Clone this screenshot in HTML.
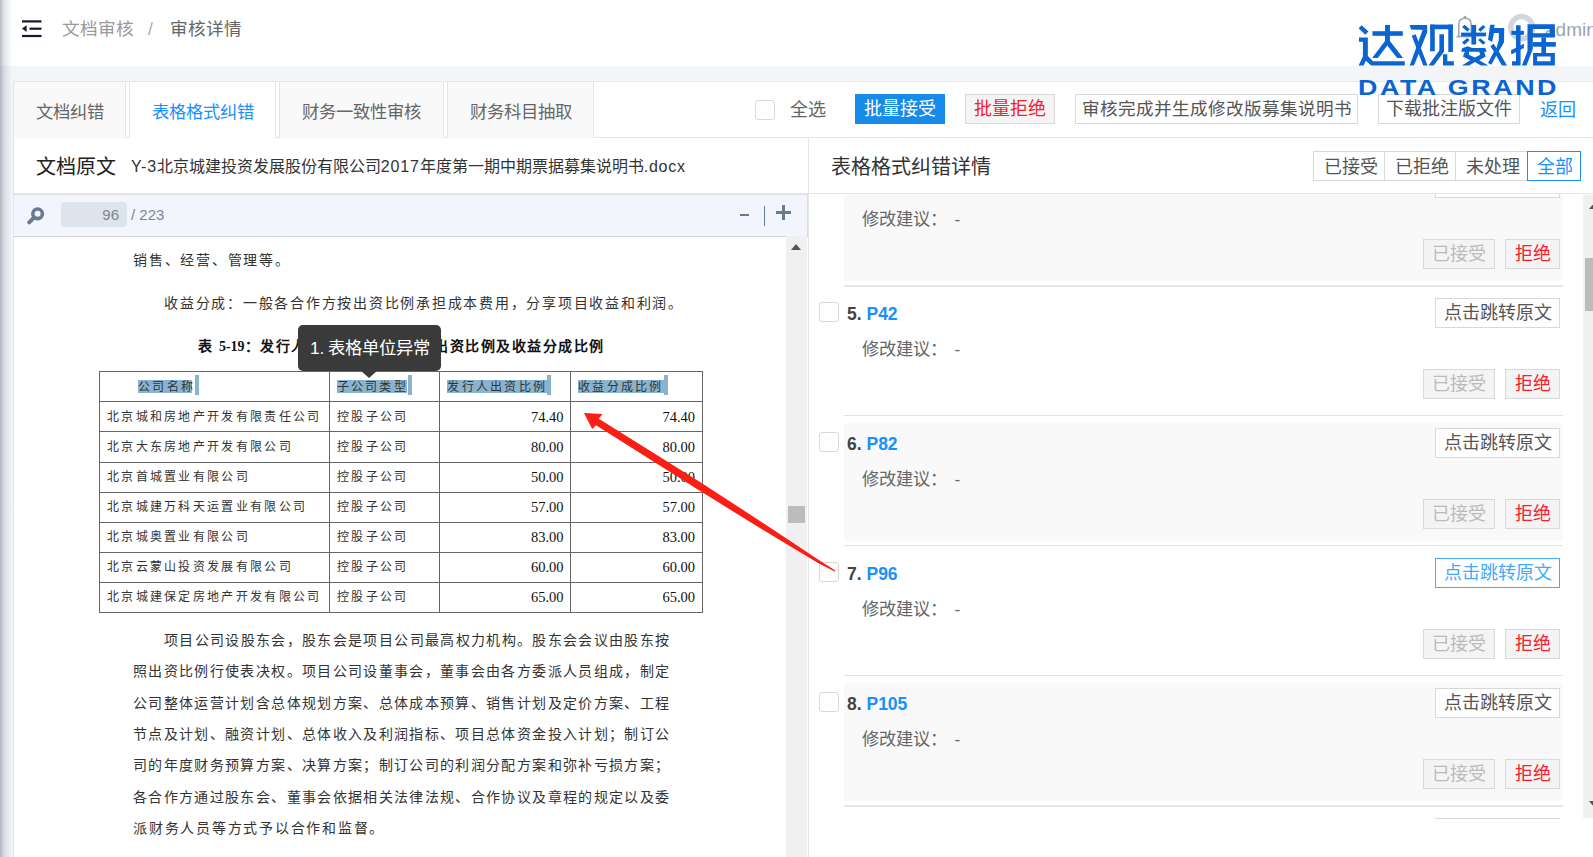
<!DOCTYPE html>
<html lang="zh-CN">
<head>
<meta charset="utf-8">
<style>
*{box-sizing:border-box;margin:0;padding:0}
html,body{width:1593px;height:857px;overflow:hidden;background:#fff}
body{position:relative;font-family:"Liberation Sans",sans-serif;color:#333}
.a{position:absolute;white-space:nowrap}
.t{line-height:1}
#shadow{position:absolute;left:0;top:0;width:12px;height:857px;background:linear-gradient(to right,rgba(110,120,135,.5),rgba(110,120,135,.2) 35%,rgba(110,120,135,0));z-index:50}
#band{position:absolute;left:0;top:66px;width:1593px;height:791px;background:#f3f5f8}
#panel{position:absolute;left:13px;top:81px;width:1600px;height:800px;background:#fff}
.tab{position:absolute;top:81px;height:57px;border:1px solid #e6e6e6;border-bottom:none;background:#f9f9f9;color:#666;font-size:17.3px;line-height:60px;text-align:center}
.tab.on{background:#fff;color:#1890ff}
.btn{position:absolute;height:30px;border:1px solid #d9d9d9;font-size:18px;line-height:28px;text-align:center;background:#fff;color:#555}
.cb{position:absolute;width:20px;height:20px;border:1px solid #d9d9d9;border-radius:3px;background:#fff}
.lt{letter-spacing:0.8px}

.dp{position:absolute;white-space:nowrap;font-size:14px;line-height:16px;letter-spacing:1.75px;color:#333}
.jl{text-align:justify;text-align-last:justify;width:537px;letter-spacing:1px}
.tc{position:absolute;white-space:nowrap;font-size:12px;line-height:14px;letter-spacing:2.3px;color:#333}
.num{position:absolute;white-space:nowrap;font-family:"Liberation Serif",serif;font-size:14.5px;line-height:16px;color:#111;text-align:right}
.hl{position:absolute;background:#8ab3cf}
</style>
</head>
<body>
<div id="shadow"></div>
<!-- header -->
<svg class="a" style="left:21px;top:19px" width="22" height="19" viewBox="0 0 22 19">
  <rect x="1" y="1.3" width="19.5" height="2.2" fill="#141a32"/>
  <rect x="8.5" y="8.6" width="12" height="2.2" fill="#141a32"/>
  <rect x="1" y="15.9" width="19.5" height="2.2" fill="#141a32"/>
  <polygon points="1,9.6 5.6,6.2 5.6,13" fill="#141a32"/>
</svg>
<div class="a t" id="bc1" style="left:62px;top:21px;font-size:17.6px;color:#999">文档审核</div>
<div class="a t" id="bcs" style="left:148px;top:21px;font-size:17.6px;color:#aaa">/</div>
<div class="a t" id="bc2" style="left:170px;top:21px;font-size:17.6px;color:#666">审核详情</div>

<div id="band"></div>
<div id="panel"></div>
<div class="a" style="left:13px;top:81px;width:1580px;height:1px;background:#e8e8e8"></div>
<div class="a" style="left:13px;top:137px;width:1px;height:720px;background:#e6e6e6"></div>
<div class="a" style="left:13px;top:137px;width:1580px;height:1px;background:#e6e6e6"></div>

<div class="tab" style="left:13px;width:113px">文档纠错</div>
<div class="tab on" style="left:129px;width:147px">表格格式纠错</div>
<div class="tab" style="left:279px;width:165px">财务一致性审核</div>
<div class="tab" style="left:447px;width:147px">财务科目抽取</div>

<div class="cb" style="left:755px;top:100px"></div>
<div class="a t" style="left:790px;top:101px;font-size:18px;color:#666">全选</div>
<div class="btn" style="left:855px;top:94px;width:90px;background:#168bea;border-color:#168bea;color:#fff">批量接受</div>
<div class="btn" style="left:965px;top:94px;width:90px;background:#f4f4f4;color:#f5222d">批量拒绝</div>
<div class="btn" style="left:1075px;top:94px;width:283px;font-size:17.6px">审核完成并生成修改版募集说明书</div>
<div class="btn" style="left:1378px;top:94px;width:142px">下载批注版文件</div>
<div class="a t" style="left:1540px;top:101px;font-size:18px;color:#1890ff">返回</div>

<!-- panel headers -->
<div class="a t" style="left:36px;top:157px;font-size:20px;color:#222">文档原文</div>
<div class="a t" style="left:131px;top:159px;font-size:16px;color:#333"><span class="lt">Y-3</span>北京城建投资发展股份有限公司<span class="lt">2017</span>年度第一期中期票据募集说明书<span class="lt">.docx</span></div>
<div class="a" style="left:14px;top:193px;width:1580px;height:1px;background:#e6e6e6"></div>
<div class="a" style="left:808px;top:137px;width:1px;height:720px;background:#e6e6e6"></div>
<div class="a t" style="left:831px;top:157px;font-size:20px;color:#333">表格格式纠错详情</div>


<!-- filter group -->
<div class="a" style="left:1313px;top:151px;width:268px;height:30px;border:1px solid #d9d9d9"></div>
<div class="a t" style="left:1324px;top:158px;font-size:18px;color:#555">已接受</div>
<div class="a" style="left:1384px;top:151px;width:1px;height:30px;background:#d9d9d9"></div>
<div class="a t" style="left:1395px;top:158px;font-size:18px;color:#555">已拒绝</div>
<div class="a" style="left:1455px;top:151px;width:1px;height:30px;background:#d9d9d9"></div>
<div class="a t" style="left:1466px;top:158px;font-size:18px;color:#555">未处理</div>
<div class="a" style="left:1527px;top:151px;width:54px;height:30px;border:1px solid #1890ff"></div>
<div class="a t" style="left:1537px;top:158px;font-size:18px;color:#1890ff">全部</div>

<!-- toolbar -->
<div class="a" style="left:14px;top:194px;width:794px;height:43px;background:#f2f6fc;border-top:1px solid #dedede;border-bottom:1px solid #cfd2d6;border-right:1px solid #dcdcdc"></div>
<svg class="a" style="left:26px;top:206px" width="20" height="20" viewBox="0 0 20 20">
  <circle cx="11.6" cy="7.8" r="4.8" fill="none" stroke="#6b7a90" stroke-width="3.6"/>
  <line x1="8.2" y1="11.3" x2="3.2" y2="16.3" stroke="#6b7a90" stroke-width="4" stroke-linecap="round"/>
</svg>
<div class="a" style="left:61px;top:202px;width:66px;height:25px;background:#dde4ec;border-radius:4px"></div>
<div class="a t" style="left:92px;top:207px;width:27px;font-size:15px;color:#7a8699;text-align:right">96</div>
<div class="a t" style="left:131px;top:207px;font-size:15px;color:#7a8699">/ 223</div>
<div class="a" style="left:740px;top:214px;width:9px;height:2.4px;background:#6b7a90"></div>
<div class="a" style="left:764px;top:206px;width:1.2px;height:20px;background:#6b7a90"></div>
<div class="a" style="left:776px;top:211.3px;width:15px;height:2.6px;background:#6b7a90"></div>
<div class="a" style="left:782.2px;top:205px;width:2.6px;height:15px;background:#6b7a90"></div>


<!-- document -->
<div class="dp" style="left:133px;top:252px">销售、经营、管理等。</div>
<div class="dp" style="left:164px;top:295px">收益分成：一般各合作方按出资比例承担成本费用，分享项目收益和利润。</div>
<div class="dp" style="left:198px;top:338px;font-weight:bold;letter-spacing:1.5px;color:#111">表 <span style="font-family:'Liberation Serif',serif;letter-spacing:0">5-19</span>：发行人合营公司股东</div>
<div class="dp" style="left:434px;top:338px;font-weight:bold;letter-spacing:1.5px;color:#111">出资比例及收益分成比例</div>
<div class="a" style="left:99px;top:371px;width:604px;height:242px;border:1px solid #666"></div>
<div class="a" style="left:99px;top:401.1px;width:604px;height:1px;background:#666"></div>
<div class="a" style="left:99px;top:431.4px;width:604px;height:1px;background:#666"></div>
<div class="a" style="left:99px;top:461.5px;width:604px;height:1px;background:#666"></div>
<div class="a" style="left:99px;top:491.7px;width:604px;height:1px;background:#666"></div>
<div class="a" style="left:99px;top:521.8px;width:604px;height:1px;background:#666"></div>
<div class="a" style="left:99px;top:551.9px;width:604px;height:1px;background:#666"></div>
<div class="a" style="left:99px;top:581.9px;width:604px;height:1px;background:#666"></div>
<div class="a" style="left:328.5px;top:371px;width:1px;height:242px;background:#666"></div>
<div class="a" style="left:439.1px;top:371px;width:1px;height:242px;background:#666"></div>
<div class="a" style="left:569.9px;top:371px;width:1px;height:242px;background:#666"></div>
<div class="hl" style="left:138px;top:380px;width:53.5px;height:13.4px"></div>
<div class="hl" style="left:195.0px;top:375px;width:3.8px;height:20px"></div>
<div class="hl" style="left:336.5px;top:380px;width:70.0px;height:13.4px"></div>
<div class="hl" style="left:408.2px;top:375px;width:3.8px;height:20px"></div>
<div class="hl" style="left:447.3px;top:380px;width:99.5px;height:13.4px"></div>
<div class="hl" style="left:546.9px;top:375px;width:3.8px;height:20px"></div>
<div class="hl" style="left:578px;top:380px;width:85.6px;height:13.4px"></div>
<div class="hl" style="left:664.2px;top:375px;width:3.8px;height:20px"></div>
<div class="tc" style="left:138px;top:380px">公司名称</div>
<div class="tc" style="left:336.5px;top:380px">子公司类型</div>
<div class="tc" style="left:447.3px;top:380px">发行人出资比例</div>
<div class="tc" style="left:578px;top:380px">收益分成比例</div>
<div class="tc" style="left:107px;top:409.8px">北京城和房地产开发有限责任公司</div>
<div class="tc" style="left:337px;top:409.8px">控股子公司</div>
<div class="num" style="left:463px;width:100.5px;top:408.8px">74.40</div>
<div class="num" style="left:594px;width:101px;top:408.8px">74.40</div>
<div class="tc" style="left:107px;top:439.9px">北京大东房地产开发有限公司</div>
<div class="tc" style="left:337px;top:439.9px">控股子公司</div>
<div class="num" style="left:463px;width:100.5px;top:438.9px">80.00</div>
<div class="num" style="left:594px;width:101px;top:438.9px">80.00</div>
<div class="tc" style="left:107px;top:470.1px">北京首城置业有限公司</div>
<div class="tc" style="left:337px;top:470.1px">控股子公司</div>
<div class="num" style="left:463px;width:100.5px;top:469.1px">50.00</div>
<div class="num" style="left:594px;width:101px;top:469.1px">50.00</div>
<div class="tc" style="left:107px;top:500.2px">北京城建万科天运置业有限公司</div>
<div class="tc" style="left:337px;top:500.2px">控股子公司</div>
<div class="num" style="left:463px;width:100.5px;top:499.2px">57.00</div>
<div class="num" style="left:594px;width:101px;top:499.2px">57.00</div>
<div class="tc" style="left:107px;top:530.3px">北京城奥置业有限公司</div>
<div class="tc" style="left:337px;top:530.3px">控股子公司</div>
<div class="num" style="left:463px;width:100.5px;top:529.3px">83.00</div>
<div class="num" style="left:594px;width:101px;top:529.3px">83.00</div>
<div class="tc" style="left:107px;top:560.4px">北京云蒙山投资发展有限公司</div>
<div class="tc" style="left:337px;top:560.4px">控股子公司</div>
<div class="num" style="left:463px;width:100.5px;top:559.4px">60.00</div>
<div class="num" style="left:594px;width:101px;top:559.4px">60.00</div>
<div class="tc" style="left:107px;top:590.2px">北京城建保定房地产开发有限公司</div>
<div class="tc" style="left:337px;top:590.2px">控股子公司</div>
<div class="num" style="left:463px;width:100.5px;top:589.2px">65.00</div>
<div class="num" style="left:594px;width:101px;top:589.2px">65.00</div>
<div class="dp jl" style="left:164px;width:506px;top:632.0px">项目公司设股东会，股东会是项目公司最高权力机构。股东会会议由股东按</div>
<div class="dp jl" style="left:133px;top:663.3px">照出资比例行使表决权。项目公司设董事会，董事会由各方委派人员组成，制定</div>
<div class="dp jl" style="left:133px;top:694.7px">公司整体运营计划含总体规划方案、总体成本预算、销售计划及定价方案、工程</div>
<div class="dp jl" style="left:133px;top:726.0px">节点及计划、融资计划、总体收入及利润指标、项目总体资金投入计划；制订公</div>
<div class="dp jl" style="left:133px;top:757.3px">司的年度财务预算方案、决算方案；制订公司的利润分配方案和弥补亏损方案；</div>
<div class="dp jl" style="left:133px;top:788.6px">各合作方通过股东会、董事会依据相关法律法规、合作协议及章程的规定以及委</div>
<div class="dp" style="left:133px;top:820.0px">派财务人员等方式予以合作和监督。</div>

<!-- right list -->
<div id="rl" class="a" style="left:809px;top:194px;width:774px;height:625px;overflow:hidden">
<div class="a" style="left:35px;top:-31.0px;width:719px;height:118px;background:#f9f9f9"></div>
<div class="cb" style="left:10px;top:-22.0px"></div>
<div class="a t" style="left:38px;top:-20.0px;font-size:17.5px;font-weight:bold;color:#444">4. <span style="color:#1890ff">P32</span></div>
<div class="a t" style="left:53px;top:17.0px;font-size:17.3px;color:#666">修改建议：&nbsp; <span style="position:relative;left:-2px">-</span></div>
<div class="btn" style="left:626px;top:-25.8px;width:125px;">点击跳转原文</div>
<div class="btn" style="left:614px;top:45.2px;width:72px;background:#f4f4f4;color:#bbb">已接受</div>
<div class="btn" style="left:696px;top:45.2px;width:55px;background:#f4f4f4;color:#f5222d">拒绝</div>
<div class="a" style="left:35px;top:91.0px;width:719px;height:2px;background:#e6e6e6"></div>
<div class="cb" style="left:10px;top:108.0px"></div>
<div class="a t" style="left:38px;top:111.5px;font-size:17.5px;font-weight:bold;color:#444">5. <span style="color:#1890ff">P42</span></div>
<div class="a t" style="left:53px;top:147.0px;font-size:17.3px;color:#666">修改建议：&nbsp; <span style="position:relative;left:-2px">-</span></div>
<div class="btn" style="left:626px;top:104.2px;width:125px;">点击跳转原文</div>
<div class="btn" style="left:614px;top:175.2px;width:72px;background:#f4f4f4;color:#bbb">已接受</div>
<div class="btn" style="left:696px;top:175.2px;width:55px;background:#f4f4f4;color:#f5222d">拒绝</div>
<div class="a" style="left:35px;top:221.0px;width:719px;height:1px;background:#e2e2e2"></div>
<div class="a" style="left:35px;top:229.0px;width:719px;height:118px;background:#f9f9f9"></div>
<div class="cb" style="left:10px;top:238.0px"></div>
<div class="a t" style="left:38px;top:241.5px;font-size:17.5px;font-weight:bold;color:#444">6. <span style="color:#1890ff">P82</span></div>
<div class="a t" style="left:53px;top:277.0px;font-size:17.3px;color:#666">修改建议：&nbsp; <span style="position:relative;left:-2px">-</span></div>
<div class="btn" style="left:626px;top:234.2px;width:125px;">点击跳转原文</div>
<div class="btn" style="left:614px;top:305.2px;width:72px;background:#f4f4f4;color:#bbb">已接受</div>
<div class="btn" style="left:696px;top:305.2px;width:55px;background:#f4f4f4;color:#f5222d">拒绝</div>
<div class="a" style="left:35px;top:351.0px;width:719px;height:1px;background:#e2e2e2"></div>
<div class="cb" style="left:10px;top:368.0px"></div>
<div class="a t" style="left:38px;top:371.5px;font-size:17.5px;font-weight:bold;color:#444">7. <span style="color:#1890ff">P96</span></div>
<div class="a t" style="left:53px;top:407.0px;font-size:17.3px;color:#666">修改建议：&nbsp; <span style="position:relative;left:-2px">-</span></div>
<div class="btn" style="left:626px;top:364.2px;width:125px;border-color:#44aaf5;color:#44aaf5">点击跳转原文</div>
<div class="btn" style="left:614px;top:435.2px;width:72px;background:#f4f4f4;color:#bbb">已接受</div>
<div class="btn" style="left:696px;top:435.2px;width:55px;background:#f4f4f4;color:#f5222d">拒绝</div>
<div class="a" style="left:35px;top:481.0px;width:719px;height:1px;background:#e2e2e2"></div>
<div class="a" style="left:35px;top:489.0px;width:719px;height:118px;background:#f9f9f9"></div>
<div class="cb" style="left:10px;top:498.0px"></div>
<div class="a t" style="left:38px;top:501.5px;font-size:17.5px;font-weight:bold;color:#444">8. <span style="color:#1890ff">P105</span></div>
<div class="a t" style="left:53px;top:537.0px;font-size:17.3px;color:#666">修改建议：&nbsp; <span style="position:relative;left:-2px">-</span></div>
<div class="btn" style="left:626px;top:494.2px;width:125px;">点击跳转原文</div>
<div class="btn" style="left:614px;top:565.2px;width:72px;background:#f4f4f4;color:#bbb">已接受</div>
<div class="btn" style="left:696px;top:565.2px;width:55px;background:#f4f4f4;color:#f5222d">拒绝</div>
<div class="a" style="left:35px;top:611.0px;width:719px;height:2px;background:#e6e6e6"></div>
<div class="cb" style="left:10px;top:628.0px"></div>
<div class="a t" style="left:38px;top:631.5px;font-size:17.5px;font-weight:bold;color:#444">9. <span style="color:#1890ff">P120</span></div>
<div class="a t" style="left:53px;top:667.0px;font-size:17.3px;color:#666">修改建议：&nbsp; <span style="position:relative;left:-2px">-</span></div>
<div class="btn" style="left:626px;top:624.2px;width:125px;">点击跳转原文</div>
<div class="btn" style="left:614px;top:695.2px;width:72px;background:#f4f4f4;color:#bbb">已接受</div>
<div class="btn" style="left:696px;top:695.2px;width:55px;background:#f4f4f4;color:#f5222d">拒绝</div>
<div class="a" style="left:35px;top:741.0px;width:719px;height:1px;background:#e2e2e2"></div>
</div>
<!-- right scrollbar -->
<div class="a" style="left:1583px;top:195px;width:10px;height:623px;background:#f0f0f0"></div>
<div class="a" style="left:1589px;top:203px;width:0;height:0;border-left:5.5px solid transparent;border-right:5.5px solid transparent;border-bottom:6px solid #555"></div>
<div class="a" style="left:1585px;top:258px;width:10px;height:53px;background:#bcbcbc"></div>
<div class="a" style="left:1589px;top:801px;width:0;height:0;border-left:5.5px solid transparent;border-right:5.5px solid transparent;border-top:6px solid #555"></div>
<!-- doc scrollbar -->
<div class="a" style="left:786px;top:236px;width:21px;height:621px;background:#f0f0f0"></div>
<div class="a" style="left:791px;top:244px;width:0;height:0;border-left:5.5px solid transparent;border-right:5.5px solid transparent;border-bottom:6px solid #555"></div>
<div class="a" style="left:788px;top:506px;width:17px;height:17px;background:#bcbcbc"></div>

<!-- tooltip -->
<div class="a" style="left:298px;top:325px;width:143px;height:45.5px;background:#3a3a3a;border-radius:5px;z-index:20"></div>
<div class="a" style="left:360px;top:370px;width:0;height:0;border-left:9.5px solid transparent;border-right:9.5px solid transparent;border-top:8.5px solid #3a3a3a;z-index:20"></div>
<div class="a t" style="left:310px;top:340px;font-size:17.3px;word-spacing:-1.5px;color:#fff;z-index:21">1. 表格单位异常</div>
<!-- arrow -->
<svg class="a" style="left:0;top:0;z-index:30" width="1593" height="857" viewBox="0 0 1593 857">
  <polygon fill="#fa1e14" points="584,413 602.5,414 598.8,418.8 700,482 760,521 820,560.8 835.4,570.6 834.6,571.4 818,563 757,526.3 697,489 596,425.3 592.2,429"/>
</svg>
<!-- logo / icons -->
<svg class="a" style="left:1455px;top:15px;z-index:5" width="20" height="24" viewBox="0 0 20 24">
  <path d="M3.8,21.3 L3.8,9.5 Q3.8,3.2 10,3.2 Q16.2,3.2 16.2,9.5 L16.2,21.3" fill="none" stroke="#9ea6b2" stroke-width="1.6"/>
  <path d="M1.5,21.6 L18.5,21.6" stroke="#9ea6b2" stroke-width="1.6"/>
  <circle cx="10" cy="2.2" r="1.4" fill="#9ea6b2"/>
</svg>
<svg class="a" style="left:1506px;top:12px;z-index:5" width="32" height="32" viewBox="0 0 32 32">
  <circle cx="15.7" cy="15.6" r="11" fill="none" stroke="#d0d7dc" stroke-width="5.5"/>
</svg>
<div class="a t" style="left:1545px;top:20px;font-size:19px;color:#9aa3b2;z-index:5">admin</div>
<svg class="a" style="left:0;top:0;z-index:10" width="1593" height="70" viewBox="0 0 1593 70">
<g fill="#0a64d2">
<g transform="translate(1355,20) scale(0.06592)">
<polygon points="55,125 100,80 205,175 155,225"/>
<polygon points="60,265 195,265 195,545 275,625 755,625 755,690 245,690 165,620 130,690 55,690 120,555 120,330 60,330"/>
<rect x="265" y="170" width="460" height="70"/>
<rect x="455" y="75" width="75" height="250"/>
<polygon points="455,320 530,320 730,575 640,575 490,385 345,575 260,575"/>
<polygon points="830,75 1095,75 1095,150 850,145"/>
<polygon points="1025,150 1095,150 1095,185 895,690 830,690"/>
<polygon points="860,240 920,215 1100,690 1035,690"/>
<rect x="1140" y="70" width="70" height="405"/>
<rect x="1140" y="70" width="345" height="70"/>
<rect x="1415" y="70" width="70" height="415"/>
<polygon points="1280,215 1350,215 1350,480 1195,690 1115,690 1280,460"/>
<polygon points="1335,520 1400,520 1400,625 1500,625 1500,690 1335,690"/>
</g>
<g transform="translate(1458,22) scale(0.03265)">
<polygon points="125,150 200,85 360,225 290,295"/>
<polygon points="615,230 770,90 840,150 690,295"/>
<rect x="95" y="325" width="765" height="115"/>
<rect x="410" y="90" width="145" height="600"/>
<polygon points="120,625 280,490 360,555 200,700"/>
<polygon points="615,550 680,495 845,625 770,700"/>
<polygon points="985,85 1125,85 1105,185 1415,185 1410,600 1330,760 1190,760 1250,560 1250,340 1100,340 1045,610 920,540"/>
<polygon points="1300,612 1410,612 1245,902 1020,1312 920,1252 1100,900"/>
<polygon points="990,743 1090,668 1250,902 1500,1332 1345,1332 1100,905"/>
<path fill-rule="evenodd" d="M95,908 L130,803 L290,743 L440,798 L830,798 L885,908 L800,913 L850,1053 L650,1168 L930,1333 L700,1333 L520,1228 L340,1333 L120,1333 L375,1173 L150,1053 L210,908 Z M335,913 L650,913 L680,1003 L515,1088 L335,1003 Z"/>
</g>
<g transform="translate(1455,20) scale(0.06592)">
<rect x="855" y="165" width="190" height="60"/>
<polygon points="925,80 995,80 995,690 865,690 865,625 925,625"/>
<polygon points="850,460 1045,360 1045,425 855,525"/>
<path fill-rule="evenodd" d="M1100,65 H1515 V265 H1180 V440 L1085,690 H1015 L1100,470 Z M1180,135 H1435 V200 H1180 Z"/>
<rect x="1180" y="335" width="350" height="70"/>
<rect x="1310" y="265" width="70" height="235"/>
<path fill-rule="evenodd" d="M1185,500 H1515 V690 H1185 Z M1245,555 H1450 V625 H1245 Z"/>
</g>
</g>
</svg>
<div class="a" id="logo2" style="left:1358px;top:76px;font-size:22px;line-height:24px;font-weight:bold;color:#0a64d2;letter-spacing:2.1px;transform:scaleX(1.22);transform-origin:0 0;z-index:10">DATA GRAND</div>
</body>
</html>
